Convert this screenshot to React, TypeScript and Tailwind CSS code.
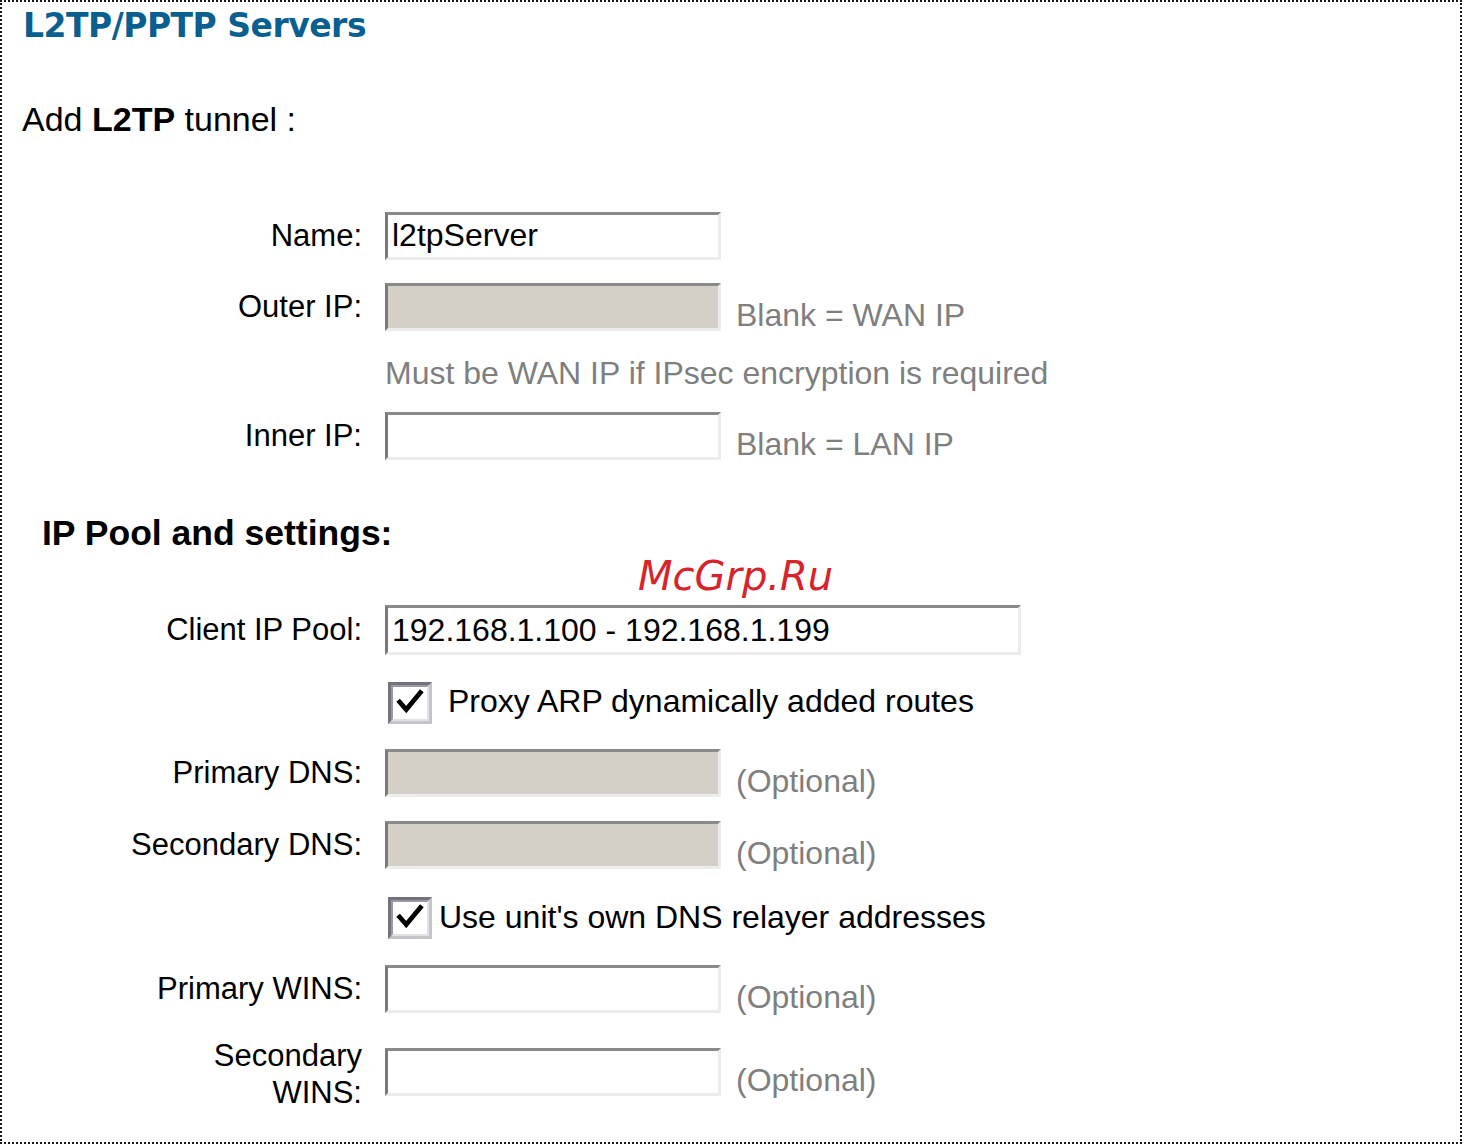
const label = "w-[360px] shrink-0 text-right text-[31px] leading-[40px] text-black";
const box = "w-[336px] h-[48px] border-[3px] border-t-[#8a8a8a] border-l-[#7a7a7a] border-r-[#ececec] border-b-[#ececec] px-[4px] text-[32px] leading-[40px] text-black";
const note = "ml-[15px] mb-[0px] text-[32px] leading-[32px] text-[#7f7f7f]";

function CheckBox() {
  return (
    <div className="w-[44px] h-[42px] shrink-0 border-[3px] border-t-[#73737e] border-l-[#73737e] border-r-[#c4c4cc] border-b-[#c4c4cc]">
      <div className="w-full h-full border-[2px] border-t-[#9a9aa4] border-l-[#9a9aa4] border-r-[#e2e2e6] border-b-[#e2e2e6] bg-white">
        <svg viewBox="0 0 34 34" className="w-full h-full">
          <path d="M6 16 L13 24 L28 6" fill="none" stroke="#000" strokeWidth="5" strokeLinecap="square" strokeLinejoin="miter" />
        </svg>
      </div>
    </div>
  );
}

function Field({ name, value, disabled, side, wide }: { name: React.ReactNode; value?: string; disabled?: boolean; side?: string; wide?: boolean }) {
  return (
    <div className="flex items-center">
      <div className={label}>{name}</div>
      <div className="ml-[23px] flex items-end">
        <div className={`${box} ${disabled ? "bg-[#d4d0c8]" : "bg-white"} ${wide ? "w-[636px] h-[50px] leading-[44px]" : ""}`}>
          {value}
        </div>
        {side && <div className={note}>{side}</div>}
      </div>
    </div>
  );
}

export default function App() {
  return (
    <div className="w-[1463px] h-[1146px] bg-white font-['Liberation_Sans',Arial,sans-serif]">
      <div className="relative w-[1462px] h-[1144px] border-2 border-dotted border-[#1a1a1a]">
        <h1 className="pl-[21px] pt-[4px] font-['DejaVu_Sans',sans-serif] font-bold text-[33px] leading-[40px] tracking-[-0.5px] text-[#0a5f91]">
          L2TP/PPTP Servers
        </h1>
        <p className="mt-[53px] pl-[20px] text-[34px] leading-[40px] text-black">
          Add <b>L2TP</b> tunnel :
        </p>

        <div className="mt-[73px]">
          <Field name="Name:" value="l2tpServer" />
        </div>
        <div className="mt-[23px]">
          <Field name="Outer IP:" disabled side="Blank = WAN IP" />
        </div>
        <p className="mt-[22px] ml-[383px] text-[32px] leading-[40px] text-[#7f7f7f]">
          Must be WAN IP if IPsec encryption is required
        </p>
        <div className="mt-[19px]">
          <Field name="Inner IP:" side="Blank = LAN IP" />
        </div>

        <h2 className="mt-[53px] pl-[40px] font-bold text-[35.5px] leading-[40px] text-black">IP Pool and settings:</h2>

        <div className="mt-[52px]">
          <Field name="Client IP Pool:" value="192.168.1.100 - 192.168.1.199" wide />
        </div>
        <div className="mt-[26px] ml-[386px] flex items-center">
          <CheckBox />
          <span className="ml-[16px] mb-[4px] text-[32px] leading-[40px] text-black">Proxy ARP dynamically added routes</span>
        </div>
        <div className="mt-[24px]">
          <Field name="Primary DNS:" disabled side="(Optional)" />
        </div>
        <div className="mt-[24px]">
          <Field name="Secondary DNS:" disabled side="(Optional)" />
        </div>
        <div className="mt-[28px] ml-[386px] flex items-center">
          <CheckBox />
          <span className="ml-[7px] mb-[2px] text-[32px] leading-[40px] text-black">Use unit's own DNS relayer addresses</span>
        </div>
        <div className="mt-[26px]">
          <Field name="Primary WINS:" side="(Optional)" />
        </div>
        <div className="mt-[20px]">
          <Field
            name={
              <span className="block pt-[4px] leading-[37px]">
                Secondary
                <br />
                WINS:
              </span>
            }
            side="(Optional)"
          />
        </div>

        <div className="absolute left-[636px] top-[554px] font-['DejaVu_Sans',sans-serif] italic text-[40px] leading-[40px] text-[#d8232a]">
          McGrp.Ru
        </div>
      </div>
    </div>
  );
}
